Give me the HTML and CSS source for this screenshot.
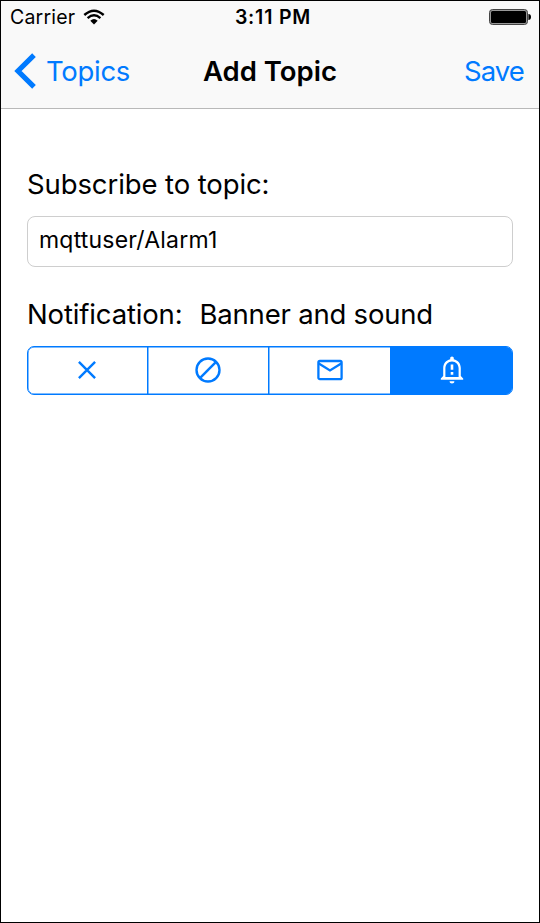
FILE: index.html
```html
<!DOCTYPE html>
<html lang="en">
<head>
<meta charset="utf-8">
<title>Add Topic</title>
<link rel="stylesheet" href="styles.css">
</head>
<body>
<div class="screen">
  <header class="top">
    <div class="status">
      <div class="status-left">
        <span class="carrier">Carrier</span>
        <svg class="wifi" width="22" height="16" viewBox="0 0 22 16" fill="none" stroke="#000" stroke-width="2.4">
          <path d="M1.3 6Q11-2.7 20.7 6M4.6 9.1Q11 3.5 17.4 9.1"/>
          <path d="M7.3 11.7Q11 8.5 14.7 11.7L11 15.4Z" fill="#000" stroke="none"/>
        </svg>
      </div>
      <span class="time">3:11 PM</span>
      <svg class="battery" width="42" height="16" viewBox="0 0 42 16">
        <rect x=".5" y=".5" width="38" height="15" rx="3" fill="#999" stroke="#444"/>
        <rect x="2" y="2" width="35" height="12" rx="1.5"/>
        <path d="M39.4 5q2.6 .2 2.6 3t-2.6 3z"/>
      </svg>
    </div>
    <nav class="nav">
      <a class="back">
        <svg width="22" height="36" viewBox="0 0 22 36" fill="none" stroke="#007aff" stroke-width="5.2"><path d="M20 2.2 4 18l16 15.8"/></svg>
        <span class="back-text">Topics</span>
      </a>
      <h1 class="title">Add Topic</h1>
      <a class="save">Save</a>
    </nav>
  </header>
  <main class="form">
    <label class="label topic-label" for="topic">Subscribe to topic:</label>
    <input class="field" id="topic" value="mqttuser/Alarm1">
    <div class="label notice"><span class="notice-name">Notification:</span><span class="notice-value">Banner and sound</span></div>
    <div class="segments">
      <div class="segment">
        <svg width="28" height="28" viewBox="0 0 28 28" fill="none" stroke="currentColor" stroke-width="2.4"><path d="M5.9 5.9 22.1 22.1M22.1 5.9 5.9 22.1"/></svg>
      </div>
      <div class="segment">
        <svg width="28" height="28" viewBox="0 0 28 28" fill="none" stroke="currentColor" stroke-width="2.4"><circle cx="14" cy="14" r="11.5"/><path d="M22.1 5.9 5.9 22.1"/></svg>
      </div>
      <div class="segment">
        <svg width="28" height="28" viewBox="0 0 28 28" fill="none" stroke="currentColor" stroke-width="2.3"><rect x="2.4" y="5" width="23.2" height="18.2" rx="1.5"/><path d="M2.4 7.2 14 14.5 25.6 7.2"/></svg>
      </div>
      <div class="segment selected">
        <svg width="28" height="28" viewBox="0 0 28 28" fill="currentColor"><path d="M14 .6c-1.1 0-1.8.8-1.8 1.8v.9C8 4.2 5.2 7.7 5.2 12v8.1l-2.4 2.4v1.3h22.4v-1.3l-2.4-2.4V12c0-4.3-2.8-7.8-7-8.7v-.9c0-1-.7-1.8-1.8-1.8zm0 4.8c3.9 0 6.6 3 6.6 6.8v8.9H7.4v-8.9c0-3.8 2.7-6.8 6.6-6.8z"/><path d="M12.7 8.4h2.6v5.3h-2.6zM12.7 16.1h2.6v2.6h-2.6zM11.6 25.2h4.8c0 1.3-1 2.3-2.4 2.3s-2.4-1-2.4-2.3z"/></svg>
      </div>
    </div>
  </main>
</div>
</body>
</html>
```
FILE: styles.css
```css
* { box-sizing: border-box; }
body {
  margin: 0;
  background: #fff;
  color: #000;
  font-family: Inter, "Liberation Sans", sans-serif;
}
.screen {
  width: 540px;
  height: 923px;
  border: 1px solid #000;
  overflow: hidden;
}
.top {
  height: 108px;
  background: #f9f9f9;
  border-bottom: 1px solid #b9b9b9;
}
.status {
  display: grid;
  grid-template-columns: 1fr auto 1fr;
  align-items: center;
  height: 32px;
  padding: 0 8px 0 9px;
  font-size: 19.5px;
  line-height: 32px;
}
.status-left { display: flex; align-items: center; gap: 8px; }
.carrier { letter-spacing: .2px; }
.time { padding-left: 5px; font-weight: 600; letter-spacing: .8px; }
.battery { justify-self: end; }
.nav {
  display: grid;
  grid-template-columns: 1fr auto 1fr;
  align-items: center;
  height: 75px;
  padding: 0 15px 0 13px;
  font-size: 27.5px;
  line-height: 36px;
}
.back { display: flex; align-items: center; gap: 10px; color: #007aff; }
.back svg { display: block; }
.back-text { letter-spacing: -.3px; }
.title { margin: 0; padding-left: 2px; font-size: 27.5px; font-weight: 600; }
.save { justify-self: end; letter-spacing: -.9px; color: #007aff; }
.form {
  display: flex;
  flex-direction: column;
  padding: 57px 26px 0;
}
.label { font-size: 27.5px; line-height: 36px; white-space: nowrap; }
.topic-label { letter-spacing: -.1px; }
.field {
  width: 100%;
  height: 51px;
  margin: 14px 0 29px;
  padding: 0 11px 3px;
  border: 1px solid #cecece;
  border-radius: 8px;
  background: #fff;
  color: #000;
  font-family: inherit;
  font-size: 23px;
  letter-spacing: .2px;
  outline: 0;
}
.notice { display: flex; gap: 17px; }
.notice-name { letter-spacing: -.15px; }
.notice-value { letter-spacing: -.2px; }
.segments {
  display: grid;
  grid-template-columns: 119px 121px 122px 1fr;
  height: 49px;
  margin-top: 14px;
  border: 1px solid #007aff;
  border-radius: 7px;
  box-shadow: inset 0 0 0 .5px #007aff;
  overflow: hidden;
  color: #007aff;
}
.segment { display: flex; align-items: center; justify-content: center; padding-bottom: 2px; }
.segment:first-child { padding-right: 1px; }
.segment + .segment { border-left: 1px solid #007aff; box-shadow: inset .5px 0 #007aff; }
.selected { background: #007aff; color: #fff; }
```
